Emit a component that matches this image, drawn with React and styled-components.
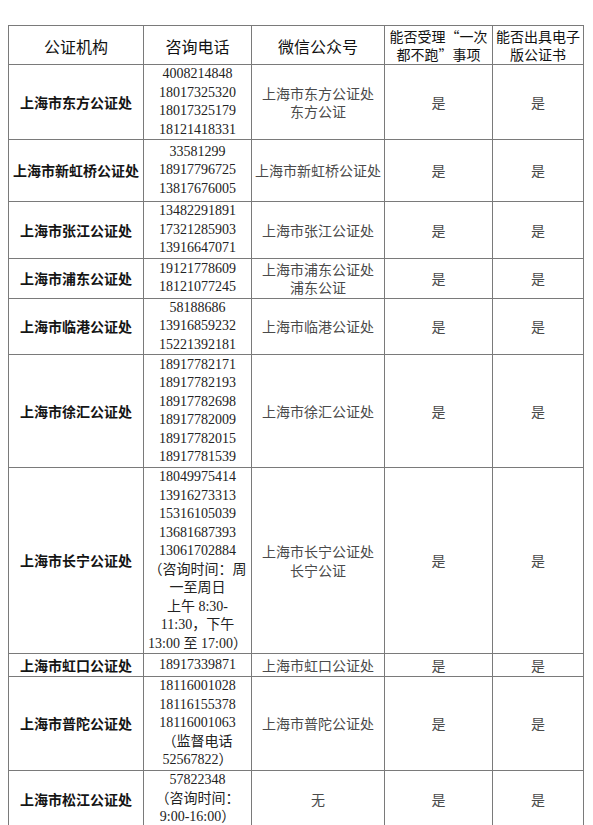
import styled, { createGlobalStyle } from "styled-components";

const GlobalStyle = createGlobalStyle`
  body {
    margin: 0;
    background: #fff;
    font-family: "Noto Sans CJK SC", sans-serif;
  }
`;

// each row: org name, phone lines, wechat lines, row height
const rows = [
  {
    org: "上海市东方公证处",
    phones: ["4008214848", "18017325320", "18017325179", "18121418331"],
    wechat: ["上海市东方公证处", "东方公证"],
    height: 75,
  },
  {
    org: "上海市新虹桥公证处",
    phones: ["33581299", "18917796725", "13817676005"],
    wechat: ["上海市新虹桥公证处"],
    height: 62,
  },
  {
    org: "上海市张江公证处",
    phones: ["13482291891", "17321285903", "13916647071"],
    wechat: ["上海市张江公证处"],
    height: 56,
  },
  {
    org: "上海市浦东公证处",
    phones: ["19121778609", "18121077245"],
    wechat: ["上海市浦东公证处", "浦东公证"],
    height: 40,
  },
  {
    org: "上海市临港公证处",
    phones: ["58188686", "13916859232", "15221392181"],
    wechat: ["上海市临港公证处"],
    height: 56,
  },
  {
    org: "上海市徐汇公证处",
    phones: [
      "18917782171",
      "18917782193",
      "18917782698",
      "18917782009",
      "18917782015",
      "18917781539",
    ],
    wechat: ["上海市徐汇公证处"],
    height: 113,
  },
  {
    org: "上海市长宁公证处",
    phones: [
      "18049975414",
      "13916273313",
      "15316105039",
      "13681687393",
      "13061702884",
      "（咨询时间：周",
      "一至周日",
      "上午 8:30-",
      "11:30，下午",
      "13:00 至 17:00）",
    ],
    wechat: ["上海市长宁公证处", "长宁公证"],
    height: 186,
  },
  {
    org: "上海市虹口公证处",
    phones: ["18917339871"],
    wechat: ["上海市虹口公证处"],
    height: 23,
  },
  {
    org: "上海市普陀公证处",
    phones: [
      "18116001028",
      "18116155378",
      "18116001063",
      "（监督电话",
      "52567822）",
    ],
    wechat: ["上海市普陀公证处"],
    height: 94,
  },
  {
    org: "上海市松江公证处",
    phones: ["57822348", "（咨询时间：", "9:00-16:00）"],
    wechat: ["无"],
    height: 57,
  },
];

const App = () => {
  return (
    <Page>
      <GlobalStyle />
      <Table>
        <colgroup>
          <col style={{ width: 135 }} />
          <col style={{ width: 108 }} />
          <col style={{ width: 133 }} />
          <col style={{ width: 108 }} />
          <col style={{ width: 91 }} />
        </colgroup>
        <thead>
          <Row $h={39}>
            <HeadCell>公证机构</HeadCell>
            <HeadCell>咨询电话</HeadCell>
            <HeadCell>微信公众号</HeadCell>
            <HeadCell $small>
              <Line>能否受理“一次</Line>
              <Line>都不跑”事项</Line>
            </HeadCell>
            <HeadCell $small>
              <Line>能否出具电子</Line>
              <Line>版公证书</Line>
            </HeadCell>
          </Row>
        </thead>
        <tbody>
          {rows.map((r) => (
            <Row key={r.org} $h={r.height}>
              <OrgCell>{r.org}</OrgCell>
              <PhoneCell>
                {r.phones.map((p, i) => (
                  <Line key={i}>{p}</Line>
                ))}
              </PhoneCell>
              <SongCell>
                {r.wechat.map((w, i) => (
                  <Line key={i}>{w}</Line>
                ))}
              </SongCell>
              <SongCell>是</SongCell>
              <SongCell>是</SongCell>
            </Row>
          ))}
        </tbody>
      </Table>
    </Page>
  );
};

const Page = styled.div`
  padding: 25px 10px 0 8px;
`;

const Table = styled.table`
  width: 575px;
  table-layout: fixed;
  border-collapse: collapse;
  border: 1px solid #7a7a7a;
`;

const Row = styled.tr`
  height: ${(p) => p.$h}px;
`;

const Cell = styled.td`
  border: 1px solid #7a7a7a;
  padding: 0;
  text-align: center;
  vertical-align: middle;
  font-size: 14px;
  line-height: 18.5px;
`;

const HeadCell = styled(Cell).attrs({ as: "th" })`
  font-weight: normal;
  color: #111;
  font-size: ${(p) => (p.$small ? "14px" : "16px")};
  line-height: ${(p) => (p.$small ? "18.3px" : "20px")};
  padding-top: ${(p) => (p.$small ? "0" : "1px")};
`;

const OrgCell = styled(Cell)`
  font-weight: bold;
  color: #151515;
`;

const PhoneCell = styled(Cell)`
  font-family: "Liberation Serif", "Noto Sans CJK SC", serif;
  color: #222;
`;

const SongCell = styled(Cell)`
  color: #4a4a4a;
`;

const Line = styled.div`
  white-space: nowrap;
`;

export default App;
